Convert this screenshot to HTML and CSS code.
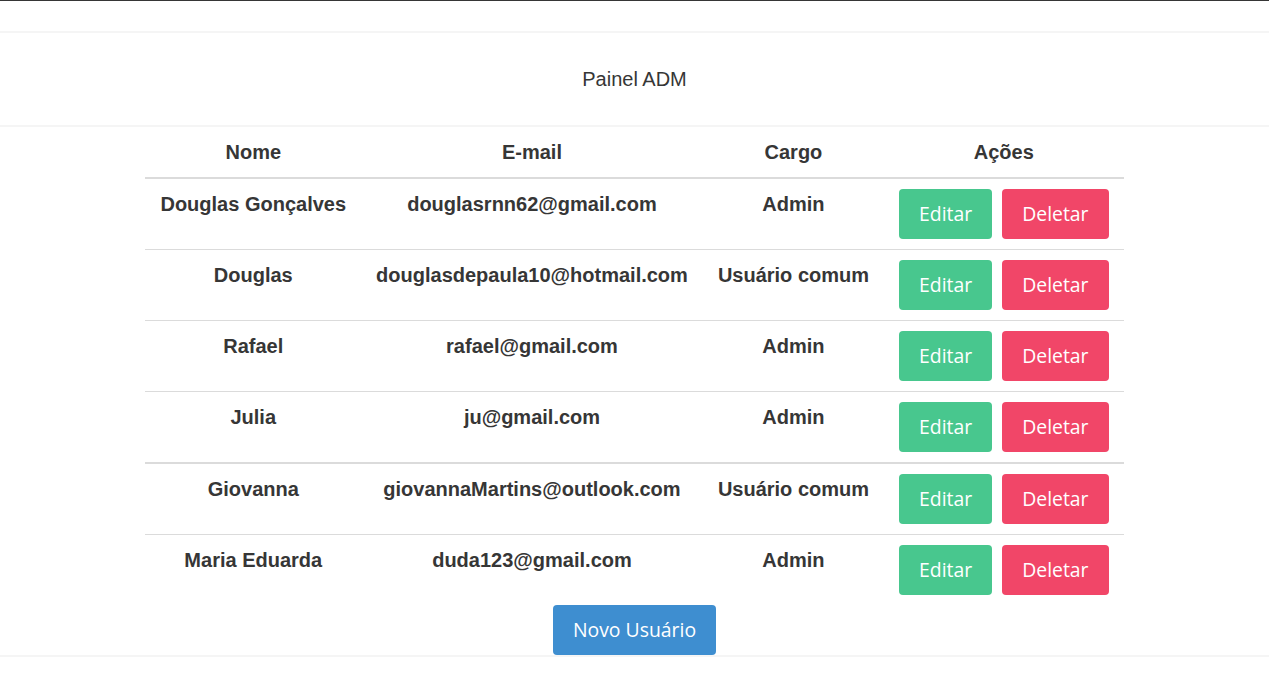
FILE: index.html
```html
<!DOCTYPE html>
<html lang="pt-BR">
<head>
<meta charset="utf-8">
<title>Painel ADM</title>
<link rel="stylesheet" href="styles.css">
</head>
<body>
<div class="topbar"></div>
<header class="hero">
  <h1 class="hero-title">Painel ADM</h1>
</header>
<main class="content">
  <table class="users">
    <thead>
      <tr><th>Nome</th><th>E-mail</th><th>Cargo</th><th>Ações</th></tr>
    </thead>
    <tbody>
      <tr>
        <td>Douglas Gonçalves</td><td>douglasrnn62@gmail.com</td><td>Admin</td>
        <td><div class="actions"><button class="btn btn-edit">Editar</button><button class="btn btn-delete">Deletar</button></div></td>
      </tr>
      <tr>
        <td>Douglas</td><td>douglasdepaula10@hotmail.com</td><td>Usuário comum</td>
        <td><div class="actions"><button class="btn btn-edit">Editar</button><button class="btn btn-delete">Deletar</button></div></td>
      </tr>
      <tr>
        <td>Rafael</td><td>rafael@gmail.com</td><td>Admin</td>
        <td><div class="actions"><button class="btn btn-edit">Editar</button><button class="btn btn-delete">Deletar</button></div></td>
      </tr>
      <tr class="row-thick">
        <td>Julia</td><td>ju@gmail.com</td><td>Admin</td>
        <td><div class="actions"><button class="btn btn-edit">Editar</button><button class="btn btn-delete">Deletar</button></div></td>
      </tr>
      <tr>
        <td>Giovanna</td><td>giovannaMartins@outlook.com</td><td>Usuário comum</td>
        <td><div class="actions"><button class="btn btn-edit">Editar</button><button class="btn btn-delete">Deletar</button></div></td>
      </tr>
      <tr>
        <td>Maria Eduarda</td><td>duda123@gmail.com</td><td>Admin</td>
        <td><div class="actions"><button class="btn btn-edit">Editar</button><button class="btn btn-delete">Deletar</button></div></td>
      </tr>
    </tbody>
  </table>
  <div class="new-user">
    <button class="btn btn-new">Novo Usuário</button>
  </div>
</main>
</body>
</html>
```

FILE: styles.css
```css
* { box-sizing: border-box; }

html, body {
  margin: 0;
  padding: 0;
  background: #ffffff;
}

body {
  font-family: "Liberation Sans", Arial, sans-serif;
  color: #363636;
}

.topbar {
  height: 31px;
  border-top: 1px solid #363636;
}

.hero {
  border-top: 2px solid #f5f5f5;
  border-bottom: 2px solid #f5f5f5;
  height: 96px;
  display: flex;
  align-items: center;
  justify-content: center;
}

.hero-title {
  margin: 0;
  font-size: 20px;
  font-weight: normal;
  color: #363636;
  line-height: 30px;
}

.content {
  display: flex;
  flex-direction: column;
  align-items: center;
  border-bottom: 2px solid #f5f5f5;
}

.users {
  border-collapse: collapse;
  border-spacing: 0;
  margin: 0 auto;
}

.users th,
.users td {
  font-size: 20px;
  font-weight: bold;
  line-height: 30px;
  padding: 10px 15px;
  text-align: center;
  vertical-align: top;
  white-space: nowrap;
  color: #363636;
}

.users th {
  border-bottom: 2px solid #dbdbdb;
}

.users td {
  border-bottom: 1px solid #dbdbdb;
}

.users tbody tr:last-child td {
  border-bottom: 0;
}

.users tr.row-thick td {
  border-bottom: 2px solid #dbdbdb;
}

.actions {
  display: flex;
  gap: 10px;
}

.btn {
  font-family: "Open Sans", "Noto Sans", sans-serif;
  font-size: 19.4px;
  height: 50px;
  line-height: 48px;
  padding: 0 19px;
  border: 1px solid transparent;
  border-radius: 4px;
  color: #ffffff;
  cursor: pointer;
  white-space: nowrap;
}

.btn-edit { background: #48c78e; }
.btn-delete { background: #f14668; }
.btn-new { background: #3e8ed0; }

.new-user {
  display: flex;
  justify-content: center;
}
```
